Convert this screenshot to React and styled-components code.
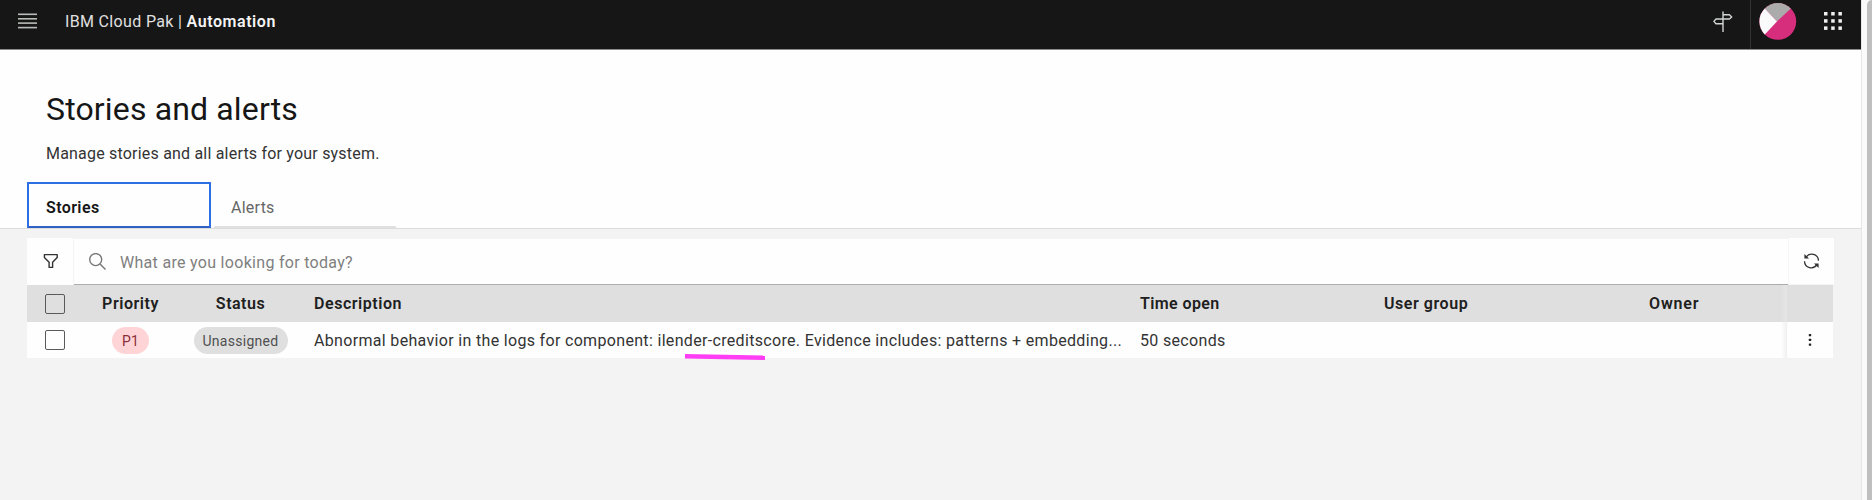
import React from 'react';
import styled, { createGlobalStyle } from 'styled-components';

const GlobalStyle = createGlobalStyle`
  * { box-sizing: border-box; }
  body {
    margin: 0;
    overflow: hidden;
    font-family: Roboto, "Liberation Sans", sans-serif;
    font-size: 16px;
    line-height: 20px;
    letter-spacing: 0.3px;
    color: #333;
    background: #f3f3f3;
  }
  svg { display: block; flex: none; }
`;

const Screen = styled.div`
  display: flex;
  width: 100%;
  height: 500px;
`;

const Page = styled.div`
  flex: 1;
  min-width: 0;
  background: #f3f3f3;
`;

const ScrollTrack = styled.div`
  width: 11px;
  background: #fafafa;
  border-left: 1px solid #e6e6e6;
  padding-left: 5px;
`;

const ScrollThumb = styled.div`
  height: 100%;
  background: #bfbfbf;
  border-top-left-radius: 5px;
`;

const TopBar = styled.header`
  display: flex;
  align-items: flex-start;
  height: 50px;
  background: #161616;
  border-bottom: 1px solid #8c8c8c;
  color: #e0e0e0;
`;

const MenuButton = styled.div`
  width: 65px;
  padding: 13px 0 0 18px;
`;

const Product = styled.div`
  flex: 1;
  padding-top: 12px;
  white-space: pre;
  letter-spacing: 0.34px;

  strong {
    font-weight: 600;
    letter-spacing: 0.55px;
    color: #f4f4f4;
  }
`;

const GuideButton = styled.div`
  width: 37px;
  padding-top: 11px;
`;

const UserArea = styled.div`
  display: flex;
  height: 49px;
  width: 111px;
  border-left: 1px solid #333;
  padding: 3px 0 0 8px;
`;

const AppSwitcher = styled.div`
  padding: 9px 0 0 27px;
`;

const PageHead = styled.section`
  height: 179px;
  background: #fefefe;
  border-bottom: 1px solid #dcdcdc;
  padding: 39px 0 0 27px;
`;

const Title = styled.h1`
  margin: 0 0 0 19px;
  font-size: 32px;
  line-height: 40px;
  font-weight: 400;
  letter-spacing: 0.15px;
  color: #161616;
`;

const Subtitle = styled.p`
  margin: 15px 0 0 19px;
  letter-spacing: 0.2px;
`;

const Tabs = styled.div`
  display: flex;
  gap: 2px;
  margin-top: 18px;
`;

const Tab = styled.div`
  width: 184px;
  height: 46px;
  padding: 14px 0 0 ${(p) => (p.$active ? 17 : 16)}px;
  border: 2px solid ${(p) => (p.$active ? '#2f6fe4' : 'transparent')};
  border-bottom-color: ${(p) => (p.$active ? '#2f62c4' : '#e0e0e0')};
  font-weight: ${(p) => (p.$active ? 600 : 400)};
  color: ${(p) => (p.$active ? '#161616' : '#666')};
  letter-spacing: ${(p) => (p.$active ? 0.4 : 0.25)}px;
`;

const Panel = styled.main`
  width: 1807px;
  margin: 9px 0 0 27px;
`;

const Toolbar = styled.div`
  display: flex;
  height: 47px;
  background: #fefefe;
`;

const FilterButton = styled.div`
  width: 47px;
  border-right: 1px solid #f3f3f3;
  padding: 15px 0 0 16px;
`;

const SearchField = styled.div`
  display: flex;
  flex: 1;
  border-top: 1px solid #f5f5f5;
  border-bottom: 1px solid #adadad;
  padding: 14px 0 0 15px;
  gap: 13px;
  color: #808080;
`;

const SearchHint = styled.span`
  line-height: 20px;
  letter-spacing: 0.3px;
`;

const RefreshButton = styled.div`
  width: 46px;
  border-left: 1px solid #f6f6f6;
  border-bottom: 1px solid #f3f3f3;
  padding: 14px 0 0 14px;
`;

const Row = styled.div`
  display: grid;
  grid-template-columns: 63px 81px 139px 826px 244px 265px 141px 1fr;
  width: 1806px;
  height: ${(p) => (p.$head ? 37 : 36)}px;
  background: ${(p) => (p.$head ? '#dfdfdf' : '#fefefe')};
  font-weight: ${(p) => (p.$head ? 600 : 400)};
  color: ${(p) => (p.$head ? '#202020' : '#333')};
  letter-spacing: ${(p) => (p.$head ? 0.55 : 0.325)}px;
`;

const Cell = styled.div`
  display: flex;
  align-items: center;
  justify-content: ${(p) => (p.$center ? 'center' : 'flex-start')};
  padding: 1px 0 0 ${(p) => (p.$center ? 0 : 4)}px;
  white-space: nowrap;
  letter-spacing: ${(p) => (p.$spacing ? `${p.$spacing}px` : 'inherit')};
`;

const CheckCell = styled.div`
  display: flex;
  align-items: center;
  padding-left: 18px;
`;

const Checkbox = styled.div`
  width: 20px;
  height: 20px;
  border: 1px solid #5a5a5a;
  border-radius: 2px;
`;

const LastCell = styled(Cell)`
  background: linear-gradient(to right, transparent calc(100% - 5px), ${(p) => (p.$head ? '#e6e6e6' : '#f3f3f3')});
`;

const ActionCell = styled.div`
  display: flex;
  align-items: center;
  justify-content: center;
  border-left: 1px solid ${(p) => (p.$head ? '#e4e4e4' : '#f0f0f0')};
`;

const Tag = styled.span`
  height: 27px;
  line-height: 28px;
  padding: 0 ${(p) => (p.$priority ? 10 : 9)}px;
  border-radius: 14px;
  font-size: 14px;
  letter-spacing: ${(p) => (p.$priority ? 0.1 : 0.28)}px;
  background: ${(p) => (p.$priority ? '#ffd4d7' : '#dfdfdf')};
  color: ${(p) => (p.$priority ? '#8a3038' : '#505050')};
`;

const Description = styled.span`
  position: relative;
`;

const Highlight = styled.svg`
  position: absolute;
  left: 370px;
  top: 22px;
`;

const MenuIcon = () => (
  <svg width="20" height="16" fill="#b9bdba">
    <rect y=".5" width="19" height="1.6" />
    <rect y="5" width="19" height="1.6" />
    <rect y="9.3" width="19" height="1.6" />
    <rect y="13.8" width="19" height="1.6" />
  </svg>
);

const SignpostIcon = () => (
  <svg width="20" height="22" fill="none" stroke="#d2d6d3" strokeWidth="1.4">
    <path d="M10 .5V21" />
    <path d="M10 3.8H16.4L18.7 5.9 16.4 8H3L.9 10.4 3 12.7H10" strokeLinejoin="round" />
  </svg>
);

const Avatar = () => (
  <svg width="38" height="38" viewBox="0 0 38 38">
    <circle cx="18.8" cy="18.4" r="18.4" fill="#d72d7d" />
    <path d="M18 18.4 5.8 5.4A18.4 18.4 0 0 1 31.8 5.4Z" fill="#ababab" />
    <path d="M18 18.4 5.8 5.4A18.4 18.4 0 0 0 5.8 31.4Z" fill="#fafafa" />
  </svg>
);

const SwitcherIcon = () => (
  <svg width="19" height="19" fill="#f0f0f0">
    {[0, 7.2, 14.4].map((y) =>
      [0, 7.2, 14.4].map((x) => <rect key={`${x}-${y}`} x={x} y={y} width="3.5" height="3.5" />),
    )}
  </svg>
);

const FilterIcon = () => (
  <svg width="16" height="16" fill="none" stroke="#333" strokeWidth="1.4" strokeLinejoin="round">
    <path d="M1.4 1.6H14.2V4.4L9.6 9.3V14.4H6.1V9.3L1.4 4.4Z" />
  </svg>
);

const SearchIcon = () => (
  <svg width="18" height="18" fill="none" stroke="#777" strokeWidth="1.4">
    <circle cx="6.7" cy="6.6" r="6" />
    <path d="M11 10.9 16.5 16.4" />
  </svg>
);

const RefreshIcon = () => (
  <svg width="17" height="18" fill="none" stroke="#333" strokeWidth="1.3">
    <path d="M3 5.6A6.7 6.7 0 0 1 15.5 8.8" />
    <path d="M14 12.4A6.7 6.7 0 0 1 1.5 9.2" />
    <path d="M1.4 2V6.4H6ZM15.6 16V11.6H11Z" fill="#333" stroke="none" />
  </svg>
);

const OverflowIcon = () => (
  <svg width="4" height="14" fill="#222">
    <rect x=".8" y="1" width="2.4" height="2.2" rx=".5" />
    <rect x=".8" y="5.8" width="2.4" height="2.2" rx=".5" />
    <rect x=".8" y="10.6" width="2.4" height="2.2" rx=".5" />
  </svg>
);

export default function App() {
  return (
    <Screen>
      <GlobalStyle />
      <Page>
        <TopBar>
          <MenuButton><MenuIcon /></MenuButton>
          <Product>IBM Cloud Pak | <strong>Automation</strong></Product>
          <GuideButton><SignpostIcon /></GuideButton>
          <UserArea>
            <Avatar />
            <AppSwitcher><SwitcherIcon /></AppSwitcher>
          </UserArea>
        </TopBar>
        <PageHead>
          <Title>Stories and alerts</Title>
          <Subtitle>Manage stories and all alerts for your system.</Subtitle>
          <Tabs>
            <Tab $active>Stories</Tab>
            <Tab>Alerts</Tab>
          </Tabs>
        </PageHead>
        <Panel>
          <Toolbar>
            <FilterButton><FilterIcon /></FilterButton>
            <SearchField>
              <SearchIcon />
              <SearchHint>What are you looking for today?</SearchHint>
            </SearchField>
            <RefreshButton><RefreshIcon /></RefreshButton>
          </Toolbar>
          <Row $head>
            <CheckCell><Checkbox /></CheckCell>
            <Cell $center>Priority</Cell>
            <Cell $center $spacing={0.5}>Status</Cell>
            <Cell>Description</Cell>
            <Cell $spacing={0.4}>Time open</Cell>
            <Cell>User group</Cell>
            <LastCell $head $spacing={0.85}>Owner</LastCell>
            <ActionCell $head />
          </Row>
          <Row>
            <CheckCell><Checkbox /></CheckCell>
            <Cell $center><Tag $priority>P1</Tag></Cell>
            <Cell $center><Tag>Unassigned</Tag></Cell>
            <Cell>
              <Description>
                Abnormal behavior in the logs for component: ilender-creditscore. Evidence includes: patterns + embedding...
                <Highlight width="82" height="8">
                  <path d="M1 3.2 81 4.8" stroke="#ff3df5" strokeWidth="4.6" />
                </Highlight>
              </Description>
            </Cell>
            <Cell>50 seconds</Cell>
            <Cell />
            <LastCell />
            <ActionCell><OverflowIcon /></ActionCell>
          </Row>
        </Panel>
      </Page>
      <ScrollTrack><ScrollThumb /></ScrollTrack>
    </Screen>
  );
}
